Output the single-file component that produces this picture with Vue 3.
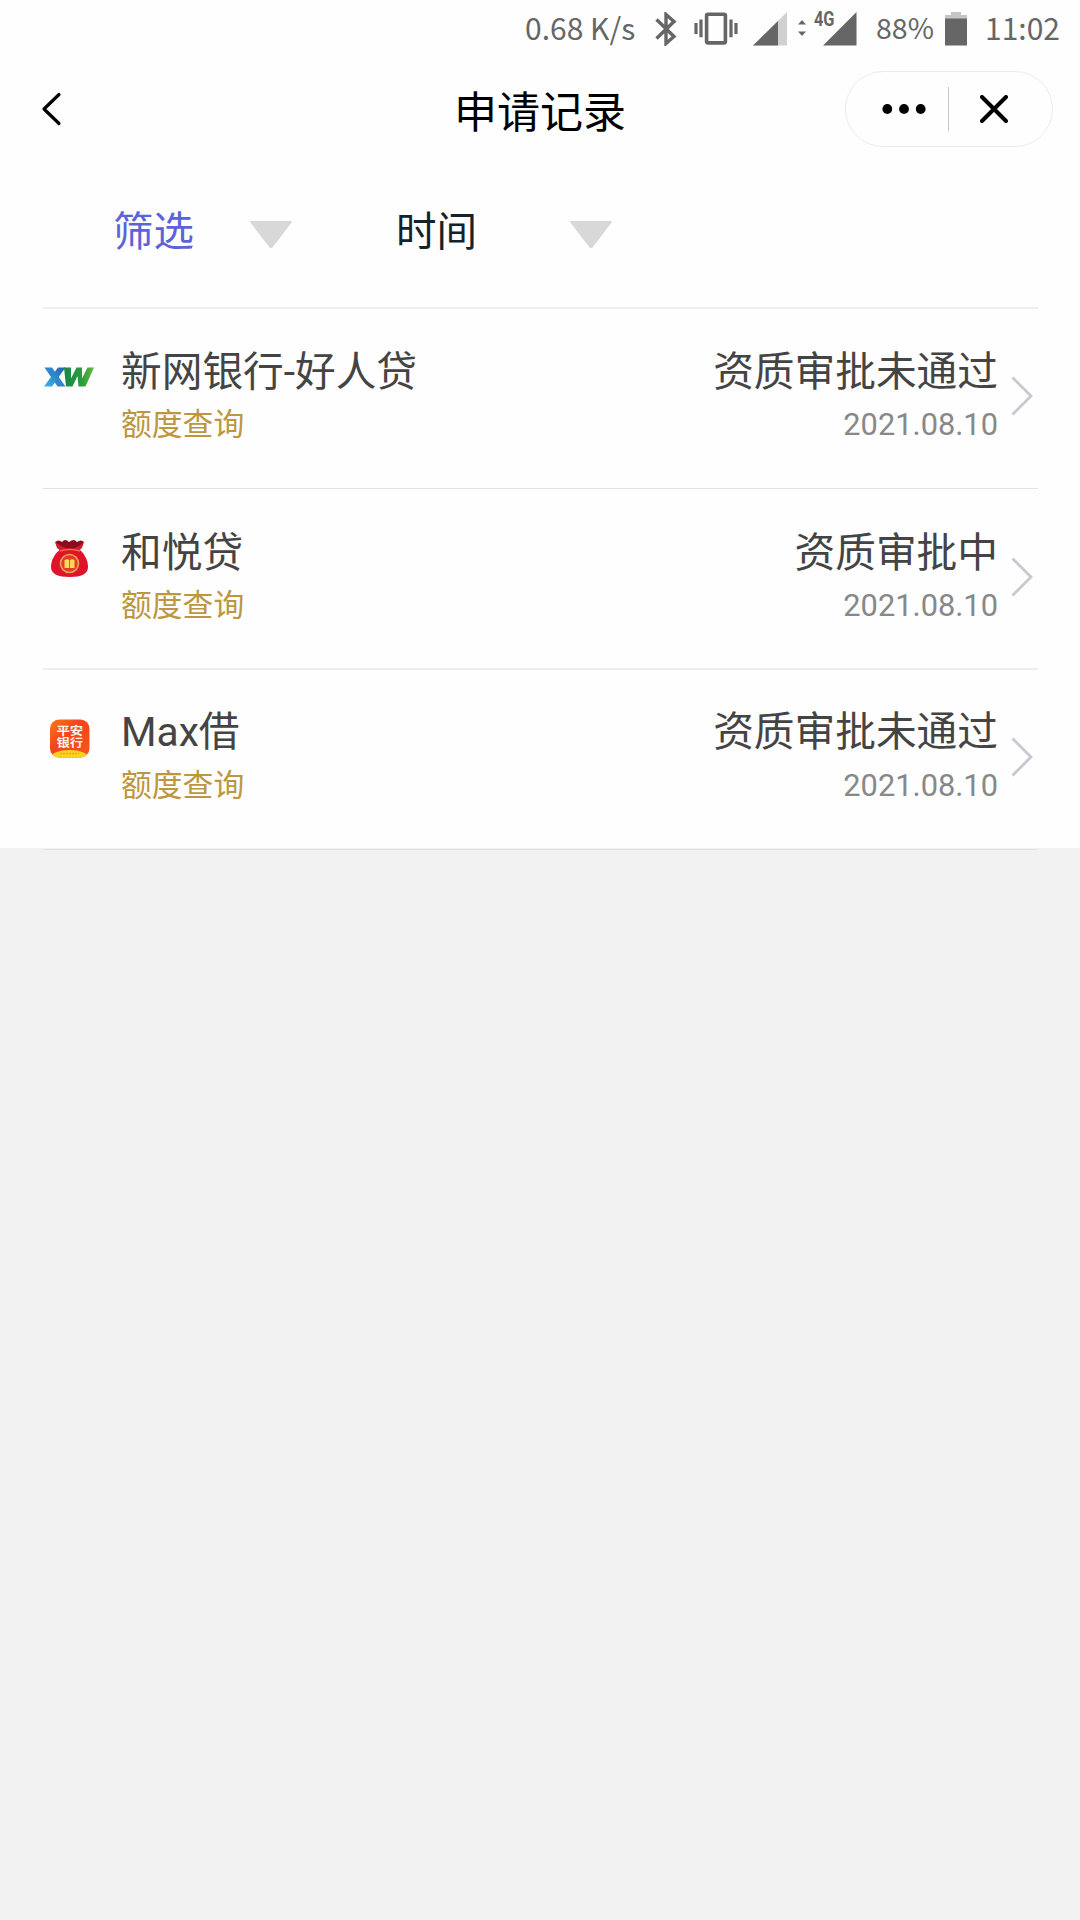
<script setup>
const records = [
  { id: 1, icon: 'xw', name: '新网银行-好人贷', status: '资质审批未通过', date: '2021.08.10' },
  { id: 2, icon: 'bag', name: '和悦贷', status: '资质审批中', date: '2021.08.10' },
  { id: 3, icon: 'pingan', name: 'Max借', status: '资质审批未通过', date: '2021.08.10' },
]
</script>

<template>
  <div class="screen">
    <div class="panel">
      <header class="statusbar">
        <span class="speed">0.68 K/s</span>
        <svg class="bluetooth" width="22" height="34" viewBox="0 0 22 34">
          <path d="M1.5 7.5L19 24.5L11 31.5V2.5L19 9.5L1.5 26.5" fill="none" stroke="#666" stroke-width="3.4" />
        </svg>
        <svg class="vibrate" width="44" height="34" viewBox="0 0 44 34">
          <rect x="12.6" y="2.3" width="18.8" height="28.6" rx="1.5" fill="none" stroke="#666" stroke-width="3.6" />
          <path d="M2 11v11M7 7.500v17.800M37 7.500v17.800M42 11v11" stroke="#666" stroke-width="3.200" />
        </svg>
        <svg class="signal" width="34" height="34" viewBox="0 0 34 34">
          <path d="M0 33.500L34 0V33.500Z" fill="#d0d0d0" />
          <path d="M0 33.500L25 9V33.500Z" fill="#666" />
        </svg>
        <svg class="traffic" width="10" height="18" viewBox="0 0 10 18">
          <path d="M1 5.500L5 1L9 5.500ZM1 12.500L5 17L9 12.500Z" fill="#666" />
        </svg>
        <svg class="signal4g" width="43" height="34" viewBox="0 0 43 34">
          <text x="0" y="14" textLength="20.500" lengthAdjust="spacingAndGlyphs" font-size="20" font-weight="700" fill="#666">4G</text>
          <path d="M9 33.500L42.500 0V33.500Z" fill="#666" />
        </svg>
        <span class="percent">88%</span>
        <svg class="battery" width="22" height="34" viewBox="0 0 22 34">
          <path d="M0 3H6V0H16V3H22V7H0Z" fill="#c6c6c6" />
          <path d="M0 6.500H22V33.500H0Z" fill="#666" />
        </svg>
        <span class="clock">11:02</span>
      </header>

      <nav class="navbar">
        <svg class="back" width="22" height="34" viewBox="0 0 22 34">
          <path d="M18 2.500L3 17L18 31.500" fill="none" stroke="#000" stroke-width="3.200" stroke-linecap="round" stroke-linejoin="round" />
        </svg>
        <h1 class="title">申请记录</h1>
        <div class="capsule">
          <svg class="more" width="44" height="10" viewBox="0 0 44 10">
            <circle cx="5.300" cy="5" r="4.900" /><circle cx="22" cy="5" r="4.900" /><circle cx="38.700" cy="5" r="4.900" />
          </svg>
          <i class="divider"></i>
          <svg class="close" width="28" height="28" viewBox="0 0 28 28">
            <path d="M2 2L26 26M26 2L2 26" stroke="#000" stroke-width="4" stroke-linecap="round" />
          </svg>
        </div>
      </nav>

      <div class="filters">
        <span class="filter active">筛选</span>
        <svg class="caret" width="42" height="28" viewBox="0 0 42 28"><path d="M0 0H42V1L22.500 26.500Q21 28 19.500 26.500L0 1Z" fill="#d8d8d8" /></svg>
        <span class="filter second">时间</span>
        <svg class="caret last" width="42" height="28" viewBox="0 0 42 28"><path d="M0 0H42V1L22.500 26.500Q21 28 19.500 26.500L0 1Z" fill="#d8d8d8" /></svg>
      </div>

      <ul class="list">
        <li v-for="r in records" :key="r.id" class="row">
          <svg v-if="r.icon === 'xw'" class="logo" width="52" height="52" viewBox="0 0 52 52">
            <defs>
              <linearGradient id="x" x1="0" y1="1" x2="1" y2="0"><stop offset="0" stop-color="#3cb4ea" /><stop offset="1" stop-color="#2460a8" /></linearGradient>
              <linearGradient id="w" x1="0" y1="0" x2="1" y2="0"><stop offset="0" stop-color="#158a48" /><stop offset=".6" stop-color="#2c9c3c" /><stop offset="1" stop-color="#62b944" /></linearGradient>
            </defs>
            <path d="M1.500 16.500H9L22.500 35.500H14.500Z" fill="#2f86cc" />
            <path d="M15 16.500H22.500L9 35.500H1Z" fill="url(#x)" />
            <path d="M21 16.500H28V27.500L33.500 16.500H39V27.500L44.500 16.500H51L42.500 35.500H35.500L34.500 25L29.500 35.500H23Z" fill="url(#w)" />
          </svg>
          <svg v-else-if="r.icon === 'bag'" class="logo" width="52" height="52" viewBox="0 0 52 52">
            <path d="M18 17H36C41 21 45 28 45 35C45 42 38 45 27 45C15 45 8 42 8 35C8 28 12 21 18 17Z" fill="#e1132c" />
            <path d="M12 10Q16 7 19 10Q22 6 26 10Q31 6 34 10Q38 7 41 10L36 17Q27 20 18 17Z" fill="#8b0c1e" />
            <path d="M12 10L18 14Q27 19 36 14L41 10L39 16L34 20Q27 17 19 20L14 16Z" fill="#d51b30" />
            <path d="M17 19Q27 16 37 19" fill="none" stroke="#ef7440" stroke-width="1.500" />
            <circle cx="26.500" cy="31.500" r="9" fill="#e33a2b" stroke="#e9a04c" stroke-width="1.600" />
            <path d="M21.500 28Q24.500 26.500 26.200 28V36H21.500ZM27 28Q29 26.500 31.500 28V36H27Z" fill="#ffd75a" />
          </svg>
          <svg v-else class="logo" width="52" height="52" viewBox="0 0 52 52">
            <defs>
              <clipPath id="tile"><rect x="7" y="7.500" width="39.500" height="38" rx="9" /></clipPath>
              <linearGradient id="orange" x1="0" y1="0" x2="1" y2="1"><stop offset="0" stop-color="#ff7a16" /><stop offset=".4" stop-color="#f5431f" /><stop offset="1" stop-color="#f5581b" /></linearGradient>
            </defs>
            <g clip-path="url(#tile)">
              <path d="M7 7H47V46H7Z" fill="url(#orange)" />
              <ellipse cx="26.500" cy="46" rx="19" ry="8" fill="#ffd21f" />
              <path d="M17 41.500H36" stroke="#e6a91c" stroke-width="1.500" stroke-dasharray="2 1" />
            </g>
            <text class="logotext" transform="scale(1.16 1)"><tspan x="11.600" y="23">平安</tspan><tspan x="11.600" y="34.800">银行</tspan></text>
          </svg>
          <div class="info">
            <div class="name">{{ r.name }}</div>
            <div class="query">额度查询</div>
          </div>
          <div class="result">
            <div class="name">{{ r.status }}</div>
            <div class="date">{{ r.date }}</div>
          </div>
          <svg class="arrow" width="22" height="40" viewBox="0 0 22 40">
            <path d="M1.500 1.500L20 20L1.500 38.500" fill="none" stroke="#c9c9d3" stroke-width="2.900" />
          </svg>
        </li>
      </ul>
    </div>
  </div>
</template>

<style>
body {
  margin: 0;
  background: #f2f2f2;
}
</style>

<style scoped>
.screen {
  width: 1080px;
  height: 1920px;
  background: #f2f2f2;
  font-family: Roboto, "Noto Sans CJK SC", sans-serif;
  overflow: hidden;
}
.panel {
  height: 848px;
  background: #fefefe;
}
.statusbar {
  display: flex;
  height: 60px;
  color: #666;
  font: 400 28.5px/54px "Noto Sans CJK SC", sans-serif;
  white-space: nowrap;
}
.statusbar svg {
  flex: none;
  margin-top: 12px;
}
.speed {
  width: 130px;
  margin-left: 525px;
  font-size: 30px;
}
.vibrate { margin-left: 17px; }
.signal { margin-left: 15px; }
.statusbar .traffic {
  margin-top: 19px;
  margin-left: 10px;
}
.signal4g {
  margin-left: 7px;
  overflow: visible;
}
.signal4g text { font-family: Roboto, sans-serif; }
.percent {
  width: 69px;
  margin-left: 19px;
}
.clock {
  margin-left: 18px;
  font-size: 30px;
}

.navbar {
  display: flex;
  align-items: center;
  height: 97px;
}
.back {
  margin-top: 1px;
  margin-left: 41px;
}
.title {
  width: 172px;
  margin: 0 0 0 391px;
  color: #000;
  font: 400 43px/60px "Noto Sans CJK SC", sans-serif;
  white-space: nowrap;
}
.capsule {
  display: flex;
  align-items: center;
  box-sizing: border-box;
  width: 208px;
  height: 76px;
  margin-left: 219px;
  border: 1px solid #ebebeb;
  border-radius: 38px;
}
.more { margin-left: 36px; }
.divider {
  width: 1px;
  height: 44px;
  margin-left: 22px;
  background: #c8c8c8;
}
.close { margin-left: 31px; }

.filters {
  display: flex;
  align-items: center;
  box-sizing: border-box;
  height: 150px;
  color: #14232b;
  font-size: 40.500px;
  line-height: 60px;
}
.filter {
  width: 81px;
  margin-left: 113px;
  white-space: nowrap;
}
.filter.active { color: #5b63da; }
.caret {
  margin-top: 5px;
  margin-left: 56px;
}
.filter.second { margin-left: 104px; }
.caret.last { margin-left: 93px; }

.list {
  margin: 0 42px 0 43px;
  padding: 0;
  list-style: none;
  border-top: 2px solid #eee;
}
.row {
  display: flex;
  box-sizing: border-box;
  height: 180px;
  border-bottom: 1px solid #e2e2e2;
}
.row:nth-child(2) {
  height: 181px;
  padding-top: 1px;
  border-bottom: 2px solid #eee;
}
.logo {
  flex: none;
  margin-top: 42px;
}
.logotext {
  fill: #fff3e8;
  font: 700 11.500px "Noto Sans CJK SC", sans-serif;
}
.info {
  flex: 1;
  margin-left: 26px;
  padding-top: 39px;
}
.result {
  padding-top: 39px;
  text-align: right;
}
.row:nth-child(3) .name {
  margin-top: -1px;
  padding-bottom: 1px;
}
.name {
  color: #444;
  font-size: 40.700px;
  line-height: 48px;
  white-space: nowrap;
}
.query,
.date {
  margin-top: 11px;
  font-size: 30.800px;
  line-height: 36px;
}
.query { color: #bd9640; }
.date { color: #888; }
.arrow {
  flex: none;
  margin: 67px 5px 0 13px;
}
</style>
